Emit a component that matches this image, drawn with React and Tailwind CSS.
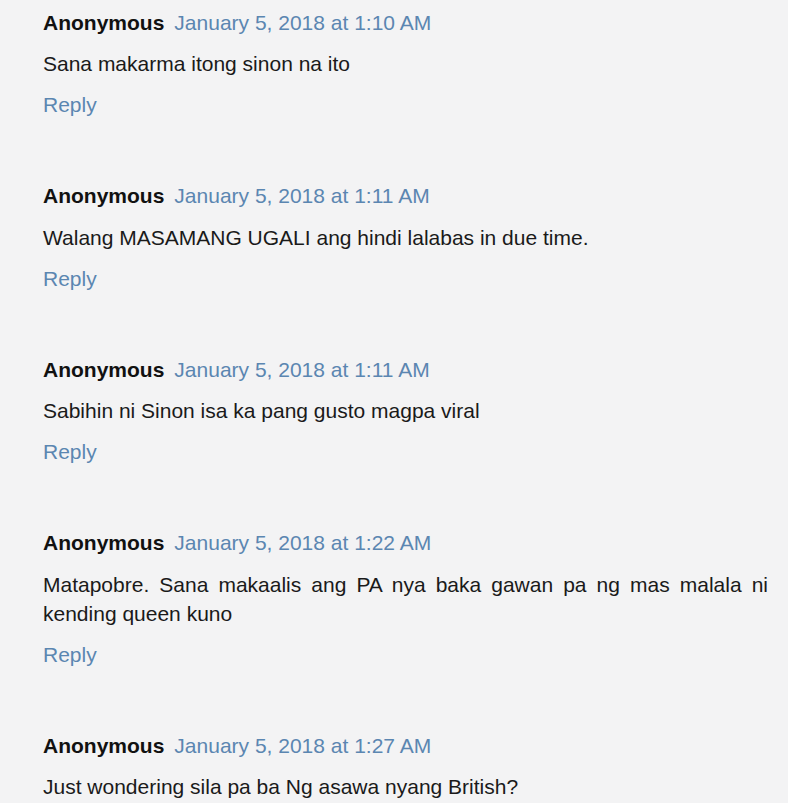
import React from "react";

const comments = [
  { time: "1:10 AM", text: "Sana makarma itong sinon na ito" },
  { time: "1:11 AM", text: "Walang MASAMANG UGALI ang hindi lalabas in due time." },
  { time: "1:11 AM", text: "Sabihin ni Sinon isa ka pang gusto magpa viral" },
  { time: "1:22 AM", text: "Matapobre. Sana makaalis ang PA nya baka gawan pa ng mas malala ni kending queen kuno" },
  { time: "1:27 AM", text: "Just wondering sila pa ba Ng asawa nyang British?" },
];

export default function App() {
  return (
    <div
      className="w-[788px] h-[803px] overflow-hidden bg-[#f3f3f4] pl-[43px] pr-[20px] pt-[7.5px] text-[21px] leading-[29px] text-[#1a1a1a]"
      style={{ fontFamily: '"Liberation Sans", Arial, sans-serif' }}
    >
      {comments.map((c, i) => (
        <div key={i} className={i === 0 ? "" : "mt-[62px]"}>
          <div className="flex items-baseline">
            <span className="font-bold text-[#111]">Anonymous</span>
            <span className="ml-[10px] text-[#5b86b1]">January 5, 2018 at {c.time}</span>
          </div>
          <p className="mt-[12.5px] text-justify">{c.text}</p>
          <div className="mt-[12px] text-[#5b86b1]">Reply</div>
        </div>
      ))}
    </div>
  );
}
